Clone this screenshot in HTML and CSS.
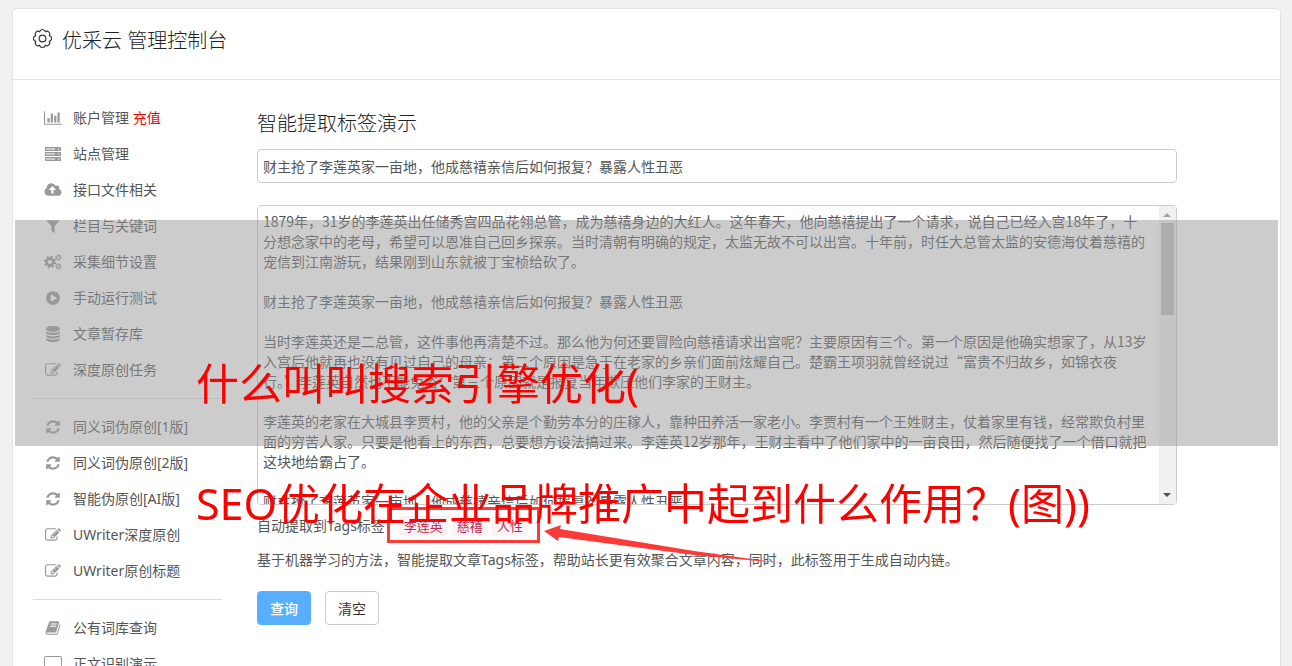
FILE: index.html
```html
<!DOCTYPE html>
<html lang="zh-CN">
<head>
    <meta charset="UTF-8">
    <meta name="viewport" content="width=device-width, initial-scale=1.0">
    <title>优采云 管理控制台</title>
    <link rel="stylesheet" href="styles.css">
</head>
<body>
    <!-- Shared icons -->
    <svg class="sprite" aria-hidden="true">
        <symbol id="i-chart" viewBox="0 0 2048 1792"><path d="M640 896v512h-256v-512h256zm384-512v1024h-256v-1024h256zm1024 1152v128h-2048v-1536h128v1408h1920zm-640-896v768h-256v-768h256zm384-384v1152h-256v-1152h256z"/></symbol>
        <symbol id="i-server" viewBox="0 0 18 16"><path fill-rule="evenodd" d="M1 1h16v4H1zM1 6h16v4H1zM1 11h16v4H1zM2 2.500v1h9v-1zM2 7.500v1h9v-1zM2 12.500v1h9v-1zM14 2.500v1h1.500v-1zM14 7.500v1h1.500v-1zM14 12.500v1h1.500v-1z"/></symbol>
        <symbol id="i-cloud" viewBox="0 0 1920 1792"><path d="M1280 864q0-14-9-23l-352-352q-9-9-23-9t-23 9l-351 351q-10 12-10 24 0 14 9 23t23 9h224v352q0 13 9.500 22.500t22.500 9.500h192q13 0 22.500-9.500t9.500-22.500v-352h224q13 0 22.500-9.500t9.500-22.500zm640 288q0 159-112.500 271.500t-271.500 112.500h-1088q-185 0-316.500-131.500t-131.500-316.500q0-130 70-240t188-165q-2-30-2-43 0-212 150-362t362-150q156 0 285.500 87t188.500 231q71-62 166-62 106 0 181 75t75 181q0 76-41 138 130 31 213.500 135.500t83.500 238.500z"/></symbol>
        <symbol id="i-filter" viewBox="0 0 1792 1792"><path d="M1595 295q17 41-14 70l-493 493v742q0 42-39 59-13 5-25 5-27 0-45-19l-256-256q-19-19-19-45v-486l-493-493q-31-29-14-70 17-39 59-39h1280q42 0 59 39z"/></symbol>
        <symbol id="i-cogs" viewBox="0 0 18 16">
            <g fill="none" stroke="currentColor">
                <circle cx="6" cy="8" r="3.400" stroke-width="2.600"/>
                <circle cx="6" cy="8" r="5.200" stroke-width="2" stroke-dasharray="2.040 2.040"/>
                <circle cx="14.500" cy="3.500" r="1.800" stroke-width="1.300"/>
                <circle cx="14.500" cy="3.500" r="2.800" stroke-width="1" stroke-dasharray="1.460 1.460"/>
                <circle cx="14.500" cy="12.500" r="1.800" stroke-width="1.300"/>
                <circle cx="14.500" cy="12.500" r="2.800" stroke-width="1" stroke-dasharray="1.460 1.460"/>
            </g>
        </symbol>
        <symbol id="i-play" viewBox="0 0 1792 1792"><path d="M896 128q209 0 385.500 103t279.500 279.500 103 385.500-103 385.500-279.500 279.500-385.500 103-385.500-103-279.500-279.500-103-385.500 103-385.500 279.500-279.500 385.500-103zm384 823q32-18 32-55t-32-55l-544-320q-31-19-64-1-32 19-32 56v640q0 37 32 56 16 8 32 8 17 0 32-9z"/></symbol>
        <symbol id="i-database" viewBox="0 0 1792 1792"><path d="M896 768q237 0 443-43t325-127v170q0 69-103 128t-280 93.500-385 34.500-385-34.500-280-93.500-103-128v-170q119 84 325 127t443 43zm0 768q237 0 443-43t325-127v170q0 69-103 128t-280 93.500-385 34.500-385-34.500-280-93.500-103-128v-170q119 84 325 127t443 43zm0-384q237 0 443-43t325-127v170q0 69-103 128t-280 93.500-385 34.500-385-34.500-280-93.500-103-128v-170q119 84 325 127t443 43zm0-1152q208 0 385 34.500t280 93.500 103 128v128q0 69-103 128t-280 93.500-385 34.500-385-34.500-280-93.500-103-128v-128q0-69 103-128t280-93.500 385-34.500z"/></symbol>
        <symbol id="i-edit" viewBox="0 0 1792 1792"><path d="M888 1184l116-116-152-152-116 116v56h96v96h56zm440-720q-16-16-33 1l-350 350q-17 17-1 33t33-1l350-350q17-17 1-33zm80 594v190q0 119-84.500 203.500t-203.500 84.500h-832q-119 0-203.500-84.500t-84.500-203.500v-832q0-119 84.500-203.500t203.500-84.500h832q63 0 117 25 15 7 18 23 3 17-9 29l-49 49q-14 14-32 8-23-6-45-6h-832q-66 0-113 47t-47 113v832q0 66 47 113t113 47h832q66 0 113-47t47-113v-126q0-13 9-22l64-64q15-15 35-7t20 29zm-96-738l288 288-672 672h-288v-288zm444 132l-92 92-288-288 92-92q28-28 68-28t68 28l152 152q28 28 28 68t-28 68z"/></symbol>
        <symbol id="i-refresh" viewBox="0 0 1792 1792"><path d="M1639 1056q0 5-1 7-64 268-268 434.500t-478 166.500q-146 0-282.500-55t-243.500-157l-129 129q-19 19-45 19t-45-19-19-45v-448q0-26 19-45t45-19h448q26 0 45 19t19 45-19 45l-137 137q71 66 161 102t187 36q134 0 250-65t186-179q11-17 53-117 8-23 30-23h192q13 0 22.500 9.500t9.500 22.500zm25-800v448q0 26-19 45t-45 19h-448q-26 0-45-19t-19-45 19-45l138-138q-148-137-349-137-134 0-250 65t-186 179q-11 17-53 117-8 23-30 23h-199q-13 0-22.500-9.500t-9.500-22.500v-7q65-268 270-434.500t480-166.500q146 0 284 55.500t245 156.500l130-129q19-19 45-19t45 19 19 45z"/></symbol>
        <symbol id="i-book" viewBox="0 0 1792 1792"><path d="M1703 478q40 57 18 129l-275 906q-19 64-76.500 107.500t-122.500 43.500h-923q-77 0-148.500-53.500t-99.500-131.500q-24-67-2-127 0-4 3-27t4-37q1-8-3-21.500t-3-19.500q2-11 8-21t16.500-23.500 16.500-23.500q23-38 45-91.500t30-91.500q3-10 .5-30t-.5-28q3-11 17-28t17-23q21-36 42-92t25-90q1-9-2.500-32t.5-28q4-13 22-30.500t22-22.500q19-26 42.500-84.500t27.500-96.500q1-8-3-25.500t-2-26.500q2-8 9-18t18-23 17-21q8-12 16.500-30.500t15-35 16-36 19.500-32 26.500-23.500 36-11.500 47.500 5.500l-1 3q38-9 51-9h761q74 0 114 56t18 130l-274 906q-36 119-71.500 153.500t-128.500 34.500h-869q-27 0-38 15-11 16-1 43 24 70 144 70h923q29 0 56-15.500t35-41.500l300-987q7-22 5-57 38 15 59 43zm-1064 2q-4 13 2 22.500t20 9.500h608q13 0 25.500-9.500t16.500-22.500l21-64q4-13-2-22.500t-20-9.500h-608q-13 0-25.500 9.500t-16.500 22.500zm-83 256q-4 13 2 22.500t20 9.500h608q13 0 25.500-9.500t16.500-22.500l21-64q4-13-2-22.500t-20-9.500h-608q-13 0-25.500 9.500t-16.500 22.500z"/></symbol>
        <symbol id="i-laptop" viewBox="0 0 18 16"><path fill-rule="evenodd" d="M2 0h14q2 0 2 2v9q0 2-2 2H2q-2 0-2-2V2q0-2 2-2zm0 1q-1 0-1 1v8q0 1 1 1h14q1 0 1-1V2q0-1-1-1zM5 14h8v1H5z"/></symbol>
    </svg>

    <div class="panel">
        <header class="panel-header">
            <svg class="gear" viewBox="0 0 18 18" aria-hidden="true">
                <path d="M15.500 6.300A2.800 2.800 0 0 1 15.500 11.700 2.800 2.800 0 0 1 11.700 15.500 2.800 2.800 0 0 1 6.300 15.500 2.800 2.800 0 0 1 2.500 11.700 2.800 2.800 0 0 1 2.500 6.300 2.800 2.800 0 0 1 6.300 2.500 2.800 2.800 0 0 1 11.700 2.500 2.800 2.800 0 0 1 15.500 6.300z"/>
                <circle cx="9" cy="9" r="3.200"/>
            </svg>
            <h1>优采云 管理控制台</h1>
        </header>

        <div class="panel-body">
            <!-- Side menu -->
            <nav class="sidebar">
                <a href="#"><svg><use href="#i-chart"/></svg><span>账户管理 <b>充值</b></span></a>
                <a href="#"><svg><use href="#i-server"/></svg>站点管理</a>
                <a href="#"><svg><use href="#i-cloud"/></svg>接口文件相关</a>
                <a href="#"><svg><use href="#i-filter"/></svg>栏目与关键词</a>
                <a href="#"><svg><use href="#i-cogs"/></svg>采集细节设置</a>
                <a href="#"><svg><use href="#i-play"/></svg>手动运行测试</a>
                <a href="#"><svg><use href="#i-database"/></svg>文章暂存库</a>
                <a href="#"><svg><use href="#i-edit"/></svg>深度原创任务</a>
                <hr>
                <a href="#"><svg><use href="#i-refresh"/></svg>同义词伪原创[1版]</a>
                <a href="#"><svg><use href="#i-refresh"/></svg>同义词伪原创[2版]</a>
                <a href="#"><svg><use href="#i-refresh"/></svg>智能伪原创[AI版]</a>
                <a href="#"><svg><use href="#i-edit"/></svg>UWriter深度原创</a>
                <a href="#"><svg><use href="#i-edit"/></svg>UWriter原创标题</a>
                <hr>
                <a href="#"><svg><use href="#i-book"/></svg>公有词库查询</a>
                <a href="#"><svg><use href="#i-laptop"/></svg>正文识别演示</a>
            </nav>

            <!-- Tag extraction form -->
            <form class="content">
                <h2>智能提取标签演示</h2>
                <input class="field" type="text" aria-label="标题" value="财主抢了李莲英家一亩地，他成慈禧亲信后如何报复？暴露人性丑恶">
                <div class="editor">
                    <textarea class="field" aria-label="正文">1879年，31岁的李莲英出任储秀宫四品花翎总管，成为慈禧身边的大红人。这年春天，他向慈禧提出了一个请求，说自己已经入宫18年了，十分想念家中的老母，希望可以恩准自己回乡探亲。当时清朝有明确的规定，太监无故不可以出宫。十年前，时任大总管太监的安德海仗着慈禧的宠信到江南游玩，结果刚到山东就被丁宝桢给砍了。

财主抢了李莲英家一亩地，他成慈禧亲信后如何报复？暴露人性丑恶

当时李莲英还是二总管，这件事他再清楚不过。那么他为何还要冒险向慈禧请求出宫呢？主要原因有三个。第一个原因是他确实想家了，从13岁入宫后他就再也没有见过自己的母亲；第二个原因是急于在老家的乡亲们面前炫耀自己。楚霸王项羽就曾经说过“富贵不归故乡，如锦衣夜
行。”李莲英自然也不能免俗；第三个原因就是报复当年欺压他们李家的王财主。

李莲英的老家在大城县李贾村，他的父亲是个勤劳本分的庄稼人，靠种田养活一家老小。李贾村有一个王姓财主，仗着家里有钱，经常欺负村里面的穷苦人家。只要是他看上的东西，总要想方设法搞过来。李莲英12岁那年，王财主看中了他们家中的一亩良田，然后随便找了一个借口就把这块地给霸占了。

财主抢了李莲英家一亩地，他成慈禧亲信后如何报复？暴露人性丑恶</textarea>
                    <div class="scrollbar" aria-hidden="true">
                        <svg viewBox="0 0 17 17" fill="#a3a3a3"><path d="M4 11l4-4 4 4z"/></svg>
                        <div class="thumb"></div>
                        <svg viewBox="0 0 17 17" fill="#505050"><path d="M4 6h8l-4 4z"/></svg>
                    </div>
                </div>
                <p class="tags">自动提取到Tags标签：<code>李莲英</code><code>慈禧</code><code>人性</code></p>
                <p>基于机器学习的方法，智能提取文章Tags标签，帮助站长更有效聚合文章内容，同时，此标签用于生成自动内链。</p>
                <div class="actions">
                    <button type="submit" class="btn btn-primary">查询</button>
                    <button type="reset" class="btn">清空</button>
                </div>
            </form>
        </div>
    </div>

    <!-- Marker around the tags -->
    <div class="marker"></div>
    <svg class="arrow" viewBox="0 0 240 42" aria-hidden="true">
        <path d="M0 9L17 3 16 7 150 29 236 41 150 33 15 15 14 19z"/>
    </svg>

    <!-- Caption band -->
    <div class="band">
        <p>什么叫叫搜索引擎优化(<br>SEO优化在企业品牌推广中起到什么作用？(图))</p>
    </div>
</body>
</html>
```
FILE: styles.css
```css
/* Base */
* {
    box-sizing: border-box;
}
body {
    position: relative;
    height: 100vh;
    margin: 0;
    padding: 8px 11px 0 12px;
    overflow: hidden;
    background-color: #f1f1f1;
    color: #555;
    font: 14px/20px "Noto Sans", "Noto Sans CJK SC", sans-serif;
}
h1, h2 {
    margin: 0;
    color: #222;
    font-size: 20px;
    font-weight: 300;
    line-height: 26px;
}
.sprite {
    position: absolute;
    width: 0;
    height: 0;
}

/* Panel */
.panel {
    border: 1px solid #e3e3e3;
    border-radius: 4px;
    background-color: #fff;
}
.panel-header {
    display: flex;
    gap: 10px;
    height: 71px;
    padding: 19px 20px;
    border-bottom: 1px solid #e3e3e3;
}
.gear {
    width: 19px;
    height: 21px;
    fill: none;
    stroke: #333;
    stroke-width: 1.1;
}
.panel-body {
    display: flex;
    gap: 35px;
    padding: 20px;
}

/* Side menu */
.sidebar {
    flex: 0 0 189px;
}
.sidebar a {
    display: flex;
    align-items: center;
    gap: 11px;
    height: 36px;
    padding-left: 11px;
    color: #555;
    text-decoration: none;
}
.sidebar svg {
    width: 18px;
    height: 16px;
    color: #999;
    fill: #999;
}
.sidebar b {
    color: #f00;
    font-weight: 400;
}
.sidebar hr {
    margin: 10px 0;
    border: 0;
    border-top: 1px solid #ddd;
}

/* Form */
.content {
    flex: 1;
    max-width: 920px;
    padding-top: 11px;
}
.field {
    display: block;
    width: 100%;
    height: 34px;
    margin: 12px 0 22px;
    padding: 5px;
    border: 1px solid #ccc;
    border-radius: 4px;
    background-color: #fff;
    color: #555;
    font: 14px/20px "Noto Sans CJK SC", sans-serif;
}
.editor {
    position: relative;
    margin-bottom: 11px;
}
.editor .field {
    height: 300px;
    margin: 0;
    padding-right: 27px;
    overflow-y: scroll;
    resize: none;
    scrollbar-width: none;
}
.scrollbar {
    position: absolute;
    top: 1px;
    right: 1px;
    bottom: 1px;
    display: flex;
    flex-direction: column;
    width: 17px;
    border-radius: 0 3px 3px 0;
    background-color: #f1f1f1;
}
.scrollbar svg {
    width: 17px;
    height: 17px;
}
.scrollbar .thumb {
    height: 92px;
    margin: 0 2px auto;
    background-color: #c1c1c1;
}
.content p {
    margin: 0 0 14px;
}
.content .tags {
    display: flex;
}
code {
    margin-right: 4px;
    padding: 0 5px;
    border-radius: 4px;
    background-color: #f9f2f4;
    color: #c7254e;
    font: 13px/20px "Noto Sans CJK SC", sans-serif;
}
.actions {
    display: flex;
    gap: 14px;
    padding-top: 7px;
}
.btn {
    height: 34px;
    padding: 0 12px;
    border: 1px solid #ccc;
    border-radius: 4px;
    background-color: #fff;
    color: #333;
    font: 14px/20px "Noto Sans CJK SC", sans-serif;
    cursor: pointer;
}
.btn-primary {
    border-color: #59afff;
    background-color: #59afff;
    color: #fff;
    font-weight: 500;
}

/* Overlays */
.marker {
    position: absolute;
    top: 507px;
    left: 387px;
    width: 153px;
    height: 36px;
    border: 3px solid #fc3a38;
}
.arrow {
    position: absolute;
    top: 522px;
    left: 544px;
    width: 240px;
    height: 42px;
    fill: #fc3a38;
}
.band {
    position: absolute;
    top: 220px;
    right: 14px;
    left: 15px;
    height: 226px;
    padding: 104px 0 0 181px;
    background-color: rgba(153, 153, 153, 0.5);
}
.band p {
    margin: 0;
    color: #f00;
    font-size: 43px;
    line-height: 120px;
    white-space: nowrap;
}
```
